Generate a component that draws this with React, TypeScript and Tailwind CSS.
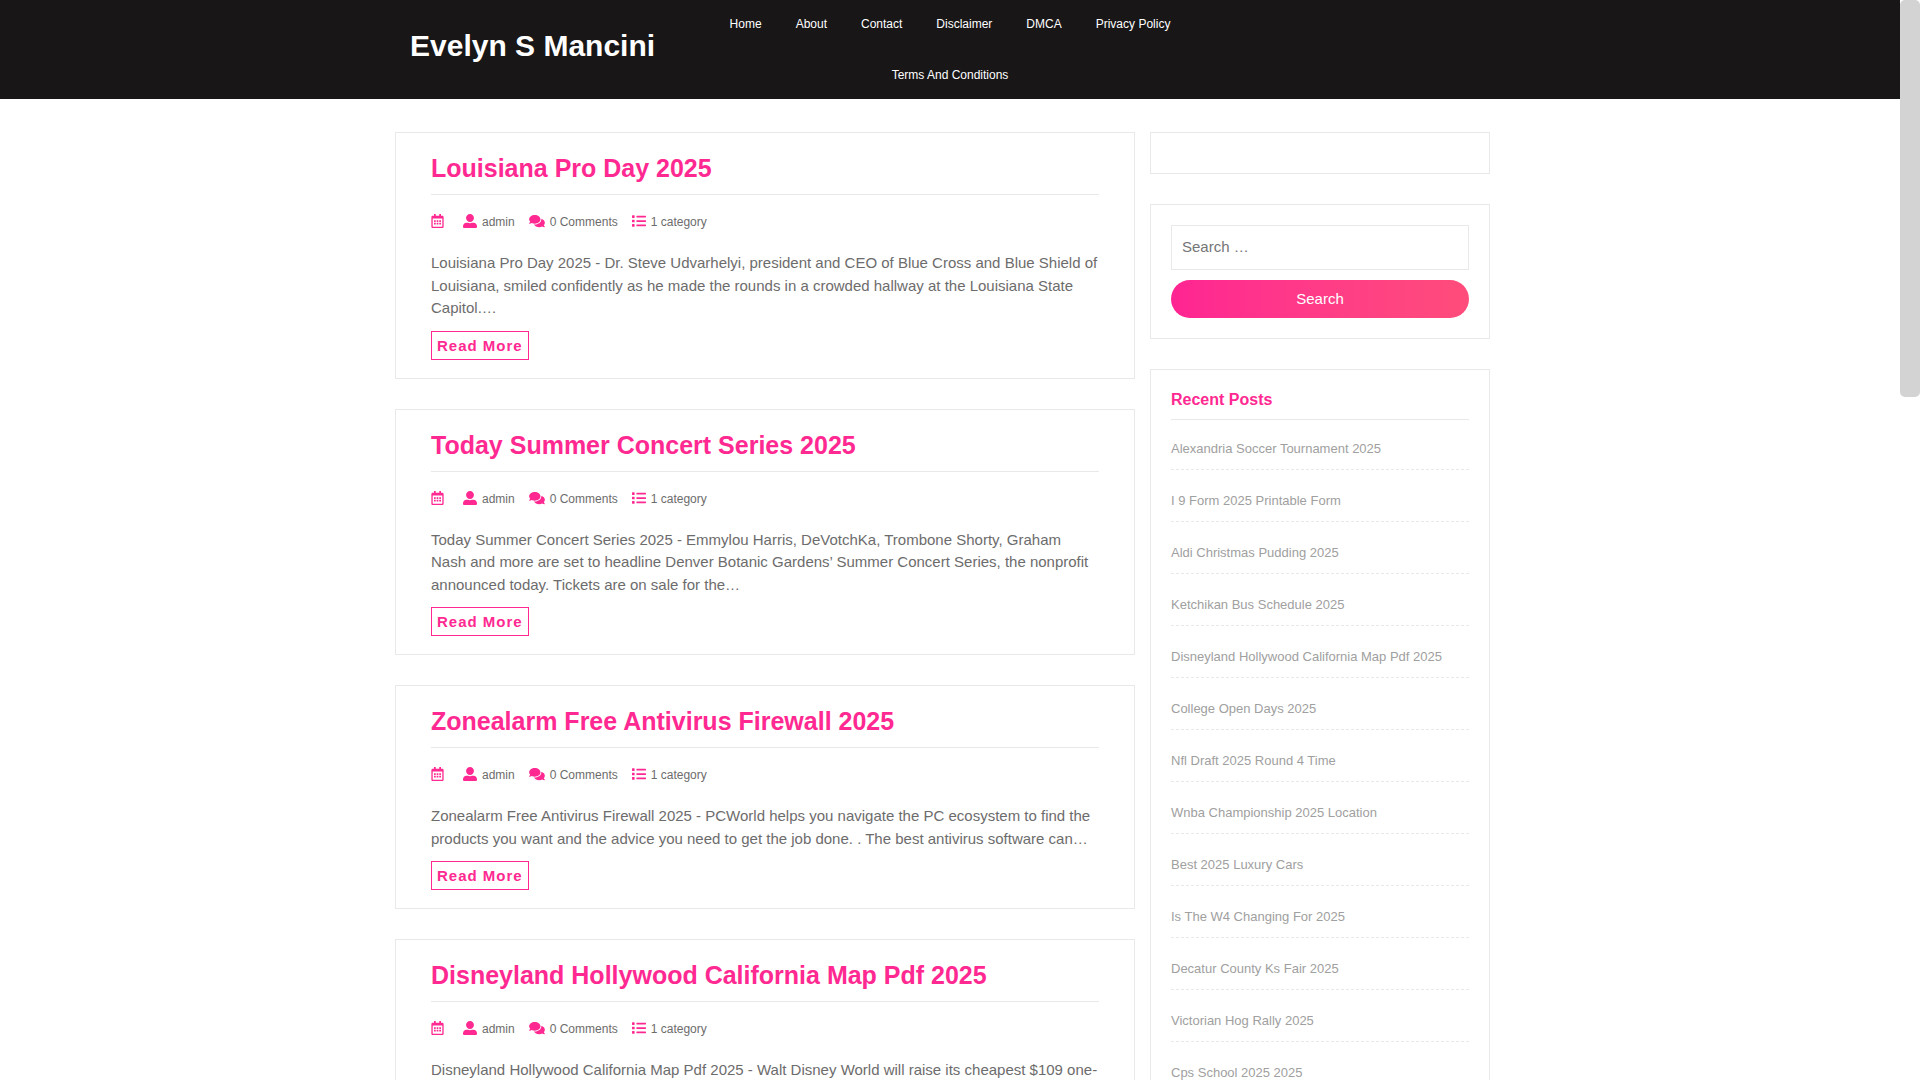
import {
  FaComments,
  FaList,
  FaRegCalendarAlt,
  FaUserAlt,
} from "react-icons/fa"

const navLinks = [
  "Home",
  "About",
  "Contact",
  "Disclaimer",
  "DMCA",
  "Privacy Policy",
  "Terms And Conditions",
]

const posts = [
  {
    title: "Louisiana Pro Day 2025",
    excerpt:
      "Louisiana Pro Day 2025 - Dr. Steve Udvarhelyi, president and CEO of Blue Cross and Blue Shield of Louisiana, smiled confidently as he made the rounds in a crowded hallway at the Louisiana State Capitol.…",
  },
  {
    title: "Today Summer Concert Series 2025",
    excerpt:
      "Today Summer Concert Series 2025 - Emmylou Harris, DeVotchKa, Trombone Shorty, Graham Nash and more are set to headline Denver Botanic Gardens’ Summer Concert Series, the nonprofit announced today. Tickets are on sale for the…",
  },
  {
    title: "Zonealarm Free Antivirus Firewall 2025",
    excerpt:
      "Zonealarm Free Antivirus Firewall 2025 - PCWorld helps you navigate the PC ecosystem to find the products you want and the advice you need to get the job done. . The best antivirus software can…",
  },
  {
    title: "Disneyland Hollywood California Map Pdf 2025",
    excerpt:
      "Disneyland Hollywood California Map Pdf 2025 - Walt Disney World will raise its cheapest $109 one-day ticket…",
  },
]

const recentPosts = [
  "Alexandria Soccer Tournament 2025",
  "I 9 Form 2025 Printable Form",
  "Aldi Christmas Pudding 2025",
  "Ketchikan Bus Schedule 2025",
  "Disneyland Hollywood California Map Pdf 2025",
  "College Open Days 2025",
  "Nfl Draft 2025 Round 4 Time",
  "Wnba Championship 2025 Location",
  "Best 2025 Luxury Cars",
  "Is The W4 Changing For 2025",
  "Decatur County Ks Fair 2025",
  "Victorian Hog Rally 2025",
  "Cps School 2025 2025",
]

function Header() {
  return (
    <header className="bg-[#181617]">
      <div className="mx-auto flex max-w-[1140px]">
        <h1 className="w-1/4 pt-[23px] pl-[30px] text-[30px] leading-[45px] font-bold whitespace-nowrap text-white">
          <a href="#">Evelyn S Mancini</a>
        </h1>
        <nav className="w-1/2">
          <ul className="flex flex-wrap justify-center gap-x-1 gap-y-[3px]">
            {navLinks.map((label) => (
              <li key={label} className="p-[15px]">
                <a href="#" className="block text-xs leading-[18px] text-white">
                  {label}
                </a>
              </li>
            ))}
          </ul>
        </nav>
      </div>
    </header>
  )
}

function MetaItem({ icon: Icon, iconWidth = "w-3.5", children }) {
  return (
    <span className="flex items-start gap-[5px]">
      <Icon className={`mt-0.5 h-3.5 shrink-0 text-[#ff2991] ${iconWidth}`} />
      {children}
    </span>
  )
}

function Post({ title, excerpt }) {
  return (
    <article className="border border-[#e9e9e9] px-[35px] pt-[15px] pb-[18px]">
      <h2 className="border-b border-[#e9e9e9] pt-0.5 pb-2 text-[25px] leading-9 font-bold text-[#ff2991]">
        <a href="#">{title}</a>
      </h2>
      <div className="flex gap-3.5 pt-[17px] pb-5 text-xs leading-5 text-[#6d6c6c]">
        <MetaItem icon={FaRegCalendarAlt} iconWidth="w-[13px]">
          <span />
        </MetaItem>
        <MetaItem icon={FaUserAlt}>
          <a href="#">admin</a>
        </MetaItem>
        <MetaItem icon={FaComments} iconWidth="w-4">
          <span>0 Comments</span>
        </MetaItem>
        <MetaItem icon={FaList}>
          <span>1 category</span>
        </MetaItem>
      </div>
      <p className="mb-[11px] text-[15px] leading-normal text-[#6d6c6c]">
        {excerpt}
      </p>
      <a
        href="#"
        className="inline-block border border-[#ff2991] px-[5px] align-top text-[15px] leading-[27px] font-bold tracking-[1px] text-[#ff2991]"
      >
        Read More
      </a>
    </article>
  )
}

function Widget({ children }) {
  return <section className="border border-[#e9e9e9] p-5">{children}</section>
}

function Sidebar() {
  return (
    <aside className="flex flex-col gap-[30px]">
      <Widget>{null}</Widget>
      <Widget>
        <form className="flex flex-col gap-2.5">
          <input
            type="search"
            aria-label="Search for"
            placeholder="Search …"
            className="h-[45px] w-full border border-[#e9e9e9] px-2.5 pb-0.5 text-[15px] placeholder:text-[#757575]"
          />
          <button
            type="button"
            className="h-[38px] rounded-full bg-linear-to-r from-[#ff2492] to-[#ff4c7b] text-[15px] text-white"
          >
            Search
          </button>
        </form>
      </Widget>
      <Widget>
        <h3 className="border-b border-[#e9e9e9] pb-2.5 text-base leading-[19px] font-bold text-[#ff2991]">
          Recent Posts
        </h3>
        <ul>
          {recentPosts.map((title) => (
            <li
              key={title}
              className="border-b border-dashed border-[#e9e9e9] pt-5 pb-[9px] text-[13px] leading-[22px] text-[#a0a0a0] first:pt-[18px]"
            >
              <a href="#">{title}</a>
            </li>
          ))}
        </ul>
      </Widget>
    </aside>
  )
}

export default function App() {
  return (
    <div className="flex h-screen overflow-hidden bg-white font-['Liberation_Sans',Arial,sans-serif]">
      <div className="flex-1 overflow-hidden">
        <Header />
        <div className="mx-auto grid max-w-[1140px] grid-cols-[37fr_17fr] items-start gap-[15px] pt-[33px] pr-[30px] pl-[15px]">
          <main className="flex flex-col gap-[30px]">
            {posts.map((post) => (
              <Post key={post.title} {...post} />
            ))}
          </main>
          <Sidebar />
        </div>
      </div>

      {/* Scrollbar */}
      <div className="w-5 bg-white">
        <div className="h-[397px] rounded-[5px] bg-[#d3d3d3]" />
      </div>
    </div>
  )
}
